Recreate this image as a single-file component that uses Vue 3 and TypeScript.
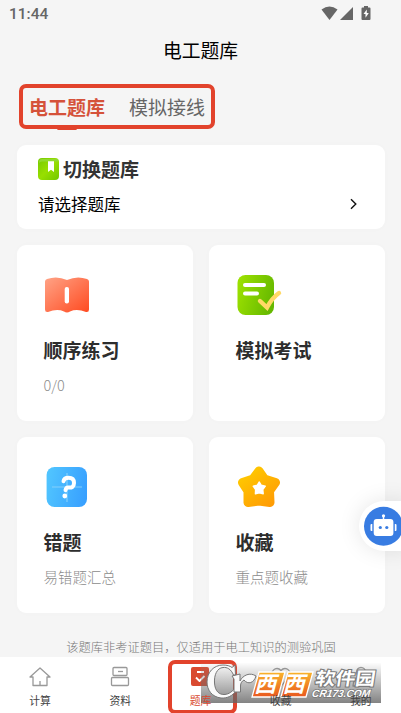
<script setup lang="ts">
interface Entry {
  id: 'practice' | 'exam' | 'wrong' | 'favorite'
  title: string
  note: string
}

interface NavItem {
  id: 'calc' | 'docs' | 'bank' | 'star' | 'mine'
  label: string
}

const entries: Entry[] = [
  { id: 'practice', title: '顺序练习', note: '0/0' },
  { id: 'exam', title: '模拟考试', note: '' },
  { id: 'wrong', title: '错题', note: '易错题汇总' },
  { id: 'favorite', title: '收藏', note: '重点题收藏' },
]

const navItems: NavItem[] = [
  { id: 'calc', label: '计算' },
  { id: 'docs', label: '资料' },
  { id: 'bank', label: '题库' },
  { id: 'star', label: '收藏' },
  { id: 'mine', label: '我的' },
]
</script>

<template>
  <div class="screen">
    <header class="status">
      <span class="clock">11:44</span>
      <svg class="signals" width="50" height="16" viewBox="0 0 50 16">
        <path d="M0.500 3.600Q8.500-2.400 16.500 3.600L8.500 14Z" fill="#666" />
        <path d="M19 14L32 1V14Z" fill="#666" />
        <path d="M41.500 1.500H43V0h4v1.500h1.500a1 1 0 0 1 1 1V13a1 1 0 0 1-1 1h-7a1 1 0 0 1-1-1V2.500a1 1 0 0 1 1-1Z" fill="#666" />
        <path d="M45.800 3.500L42.500 8h2v3.800L47.800 7h-2Z" fill="#fff" />
      </svg>
    </header>

    <h1 class="title">电工题库</h1>

    <nav class="tabs">
      <span class="tab active">电工题库</span>
      <span class="tab">模拟接线</span>
      <i class="mark mark-tabs"></i>
    </nav>

    <main class="content">
      <section class="card switcher">
        <div class="switch-head">
          <svg width="21" height="22" viewBox="0 0 21 22">
            <defs>
              <linearGradient id="bookGreen" x1="0" y1="0" x2="1" y2="1">
                <stop offset="0" stop-color="#75c900" />
                <stop offset="0.500" stop-color="#98df00" />
                <stop offset="1" stop-color="#72c700" />
              </linearGradient>
            </defs>
            <rect width="21" height="22" rx="4" fill="url(#bookGreen)" />
            <path d="M1 4Q1 1 4 1H20V3.500H4Q2 3.500 1 5Z" fill="#91da2e" />
            <path d="M10 3.200H16V14L13 11.800L10 14Z" fill="#fff" />
          </svg>
          <h2>切换题库</h2>
        </div>
        <div class="picker">
          <span>请选择题库</span>
          <svg width="8" height="12" viewBox="0 0 8 12">
            <path d="M1 1.200L5.800 6L1 10.800" fill="none" stroke="#111" stroke-width="1.400" />
          </svg>
        </div>
      </section>

      <section class="grid">
        <article v-for="e in entries" :key="e.id" class="card entry">
          <svg v-if="e.id === 'practice'" class="art" width="48" height="48" viewBox="0 0 48 48">
            <defs>
              <linearGradient id="bookRed" x1="0" y1="0" x2="1" y2="1">
                <stop offset="0" stop-color="#ffa386" />
                <stop offset="1" stop-color="#ff4a20" />
              </linearGradient>
            </defs>
            <path d="M2 10.500Q2 8.500 4 8Q14 4.500 24 9Q34 4.500 44 8Q46 8.500 46 10.500V38.500Q46 41.500 43 41Q34 37.500 27 40.500Q24 42.500 21 40.500Q14 37.500 5 41Q2 41.500 2 38.500Z" fill="url(#bookRed)" />
            <rect x="21.700" y="16" width="4.300" height="16.500" rx="2" fill="#fff" />
          </svg>
          <svg v-else-if="e.id === 'exam'" class="art" width="48" height="48" viewBox="0 0 48 48">
            <defs>
              <linearGradient id="paperGreen" x1="0" y1="0.300" x2="1" y2="0.600">
                <stop offset="0" stop-color="#9be000" />
                <stop offset="1" stop-color="#65b800" />
              </linearGradient>
            </defs>
            <rect x="2.500" y="4" width="36.500" height="40" rx="8" fill="url(#paperGreen)" />
            <rect x="8" y="12" width="23" height="4" rx="2" fill="#fff" />
            <rect x="8" y="20.500" width="16" height="4" rx="2" fill="#fff" />
            <path d="M25 30L32 36.500Q37 27 44 22" fill="none" stroke="#ffd967" stroke-width="4.400" stroke-linecap="round" />
          </svg>
          <svg v-else-if="e.id === 'wrong'" class="art" width="48" height="48" viewBox="0 0 48 48">
            <defs>
              <linearGradient id="askBlue" x1="0" y1="0.400" x2="1" y2="0.600">
                <stop offset="0" stop-color="#50c4ff" />
                <stop offset="1" stop-color="#38a0ff" />
              </linearGradient>
            </defs>
            <rect x="3.600" y="4" width="40.400" height="40" rx="8" fill="url(#askBlue)" />
            <path d="M9 24H39M24 10V39" stroke="#83cffb" stroke-width="1.200" />
            <path d="M20.500 18.300Q21 14.800 25.500 14.800Q31 14.800 31 20Q31 25.300 25 24.500Q23 24.500 22.500 27.200" fill="none" stroke="#fff" stroke-width="4" stroke-linecap="round" stroke-linejoin="round" />
            <circle cx="21.800" cy="33" r="2.400" fill="#fff" />
          </svg>
          <svg v-else class="art" width="48" height="48" viewBox="0 0 48 48">
            <defs>
              <linearGradient id="starGold" gradientUnits="userSpaceOnUse" x1="10" y1="6" x2="38" y2="42">
                <stop offset="0" stop-color="#ffcb00" />
                <stop offset="1" stop-color="#ff9b05" />
              </linearGradient>
            </defs>
            <path d="M24 8L29.500 16L40.500 19.500L34.500 28L35 39.500L24 38L13 39.500L13 28L7.500 19.500L18 16Z" fill="url(#starGold)" stroke="url(#starGold)" stroke-width="9" stroke-linejoin="round" />
            <path d="M24.300 19L26.300 22.300L30.300 23.200L27.800 26.500L28.200 30.800L24.300 29.800L20.400 30.800L20.600 26.500L18.200 23.200L22.200 22.300Z" fill="#fff" stroke="#fff" stroke-width="1.400" stroke-linejoin="round" />
          </svg>
          <h3>{{ e.title }}</h3>
          <p v-if="e.note">{{ e.note }}</p>
        </article>
      </section>

      <p class="notice">该题库非考证题目，仅适用于电工知识的测验巩固</p>
    </main>

    <aside class="assistant">
      <svg width="40" height="40" viewBox="0 0 40 40">
        <circle cx="19.500" cy="20.300" r="19.500" fill="#387ce2" />
        <rect x="6.500" y="18" width="26" height="7" rx="1" fill="#fff" />
        <rect x="8.300" y="11.500" width="22.500" height="20" rx="4.500" fill="#387ce2" />
        <rect x="9.700" y="13" width="19.700" height="17" rx="3" fill="#fff" />
        <path d="M19.500 9V14" stroke="#fff" stroke-width="1.500" />
        <circle cx="19.500" cy="9.800" r="1.600" fill="#fff" />
        <circle cx="16.300" cy="21.500" r="1.600" fill="#387ce2" />
        <circle cx="22.800" cy="21.500" r="1.600" fill="#387ce2" />
      </svg>
    </aside>

    <footer class="bottom">
      <div v-for="n in navItems" :key="n.id" class="nav-item" :class="{ active: n.id === 'bank' }">
        <svg width="22" height="22" viewBox="0 0 22 22" fill="none" stroke="#999" stroke-width="1.300" stroke-linejoin="round">
          <path v-if="n.id === 'calc'" d="M1 11L11 2L21 11H18V19.500H4V11ZM11 15V19.500" />
          <template v-else-if="n.id === 'docs'">
            <rect x="4" y="1.500" width="14" height="8" rx="1" />
            <rect x="2.500" y="11.500" width="17" height="8" rx="1" />
            <path d="M9 5.500H14" />
          </template>
          <template v-else-if="n.id === 'bank'">
            <rect x="2" y="1" width="18" height="19" rx="2" fill="#d94a30" stroke="none" />
            <path d="M8 6H15M7 11.500L10.500 15L15.500 10" stroke="#fff" stroke-width="1.800" />
          </template>
          <path v-else-if="n.id === 'star'" d="M11 20L3 11.500C-1 6 6-1 11 4.500C16-1 23 6 19 11.500Z" />
          <template v-else>
            <circle cx="11" cy="6" r="4.500" />
            <path d="M3 20Q3 12 11 12T19 20Z" />
          </template>
        </svg>
        <span>{{ n.label }}</span>
      </div>
      <i class="mark mark-nav"></i>
      <div class="watermark">
        <svg width="180" height="40" viewBox="0 0 180 40">
          <defs>
            <linearGradient id="orange" x1="0" y1="0" x2="0" y2="1">
              <stop offset="0" stop-color="#f9b52b" />
              <stop offset="1" stop-color="#e9571f" />
            </linearGradient>
          </defs>
          <g fill="#fafafa" stroke="#777" stroke-width="1" stroke-linejoin="round">
            <path d="M34 2L34.500 12H32.500C30 6 26 4 22 4.500C16 5 13 12 13.500 20C14 28 18 32 24 31.500C28 31 31 29 34 25L35.500 27C32 33 26 35.500 20 35C11 34 6 27 6 19C6 9 13 2 22 2C26 2 29 3 31 4.500Z" />
            <path d="M31 13L39 11V18C42 12 49 9 55 13C53 20 47 22 43 17C41 18 39.500 20 39.500 23V29H33V16Z" />
          </g>
          <path d="M58 9H84L77 34H51ZM87 9H112L105 34H80Z" fill="url(#orange)" stroke="#fff" stroke-width="1.300" />
          <g transform="skewX(-15)" class="wm-west">
            <text x="61" y="29.500" textLength="22" lengthAdjust="spacingAndGlyphs">西</text>
            <text x="89.500" y="29.500" textLength="22" lengthAdjust="spacingAndGlyphs">西</text>
          </g>
          <g transform="skewX(-9)">
            <text x="117" y="22.500" class="wm-name" textLength="60" lengthAdjust="spacingAndGlyphs">软件园</text>
            <text x="116" y="34" class="wm-url" textLength="58" lengthAdjust="spacingAndGlyphs">CR173.COM</text>
          </g>
        </svg>
      </div>
    </footer>
  </div>
</template>

<style>
body {
  margin: 0;
  overflow: hidden;
}
</style>

<style scoped>
.screen {
  position: relative;
  display: flex;
  flex-direction: column;
  width: 401px;
  height: 713px;
  overflow: hidden;
  background: #f5f5f5;
  color: #000;
  font-family: "Noto Sans CJK SC", sans-serif;
}
h1, h2, h3, p {
  margin: 0;
}
svg {
  display: block;
  flex: none;
}
.status {
  display: flex;
  justify-content: space-between;
  height: 32px;
  padding: 6px 30px 0 9px;
  box-sizing: border-box;
  color: #666;
}
.clock {
  font: 500 15.500px/17px Roboto, sans-serif;
}
.title {
  height: 37px;
  font-size: 18.800px;
  font-weight: 400;
  line-height: 35px;
  text-align: center;
}
.tabs {
  position: relative;
  display: flex;
  gap: 24px;
  height: 76px;
  padding: 23px 29px 0;
  box-sizing: border-box;
}
.tab {
  position: relative;
  height: 38px;
  color: #666;
  font-size: 19px;
  line-height: 30px;
}
.tab.active {
  color: #d5523a;
  font-weight: 700;
}
.tab.active::after {
  content: "";
  position: absolute;
  bottom: 0;
  left: 28px;
  width: 20px;
  height: 3px;
  border-radius: 2px;
  background: #e0432d;
}
.mark {
  position: absolute;
  box-sizing: border-box;
  border: 4px solid #e2432c;
  border-radius: 7px;
}
.mark-tabs {
  top: 15px;
  left: 19px;
  width: 196px;
  height: 45px;
}
.content {
  display: flex;
  flex: 1;
  flex-direction: column;
  gap: 16px;
  padding: 0 16px 0 17px;
}
.card {
  border-radius: 9px;
  background: #fff;
  box-shadow: 0 0 8px rgba(0, 0, 0, 0.015);
}
.switcher {
  height: 84px;
  padding: 11px 27px 0 21px;
  box-sizing: border-box;
}
.switch-head {
  display: flex;
  align-items: center;
  gap: 4px;
  height: 25px;
}
.switch-head h2 {
  color: #333;
  font-size: 19px;
  line-height: 25px;
}
.picker {
  display: flex;
  align-items: center;
  justify-content: space-between;
  height: 24px;
  margin-top: 10.500px;
  font-size: 16.500px;
}
.grid {
  display: grid;
  grid-template-columns: 176px 176px;
  grid-auto-rows: 176px;
  gap: 16px;
}
.entry {
  padding: 26px 0 0 26px;
  box-sizing: border-box;
}
.entry h3 {
  margin: 17px 0 0 0.500px;
  color: #2d2d2d;
  font-size: 19px;
  line-height: 28px;
}
.entry p {
  margin: 10px 0 0 0.500px;
  color: #8c8c8c;
  font-size: 14.500px;
  font-weight: 300;
  line-height: 22px;
}
.notice {
  margin-top: 8px;
  color: #777;
  font-size: 12.250px;
  font-weight: 300;
  line-height: 20px;
  text-align: center;
}
.assistant {
  position: absolute;
  top: 501px;
  right: -8px;
  width: 50px;
  height: 50px;
  padding: 5px;
  box-sizing: border-box;
  border-radius: 25px 0 0 25px;
  background: #fff;
  box-shadow: 0 0 22px rgba(0, 0, 0, 0.1);
}
.bottom {
  position: relative;
  display: grid;
  grid-template-columns: repeat(5, 80.200px);
  height: 56px;
  background: #fff;
}
.nav-item {
  display: flex;
  flex-direction: column;
  align-items: center;
  gap: 4px;
  padding-top: 9px;
  color: #444;
  font-size: 10.800px;
  line-height: 16px;
}
.nav-item span {
  position: relative;
  z-index: 1;
}
.nav-item.active {
  color: #d94a30;
}
.mark-nav {
  top: 3px;
  left: 168px;
  width: 69px;
  height: 54px;
}
.watermark {
  position: absolute;
  top: 6px;
  left: 201px;
  width: 180px;
  height: 40px;
  background: linear-gradient(rgba(210, 210, 210, 0.05), rgba(100, 100, 100, 0.8));
}
.wm-west {
  fill: #fff;
  font-size: 22px;
  font-weight: 700;
}
.wm-name {
  fill: #fff;
  stroke: #777;
  stroke-width: 2px;
  paint-order: stroke;
  font-size: 18px;
  font-weight: 700;
}
.wm-url {
  fill: #fff;
  stroke: #777;
  stroke-width: 1.500px;
  paint-order: stroke;
  font: italic 700 10.500px "Liberation Sans", sans-serif;
}
</style>
